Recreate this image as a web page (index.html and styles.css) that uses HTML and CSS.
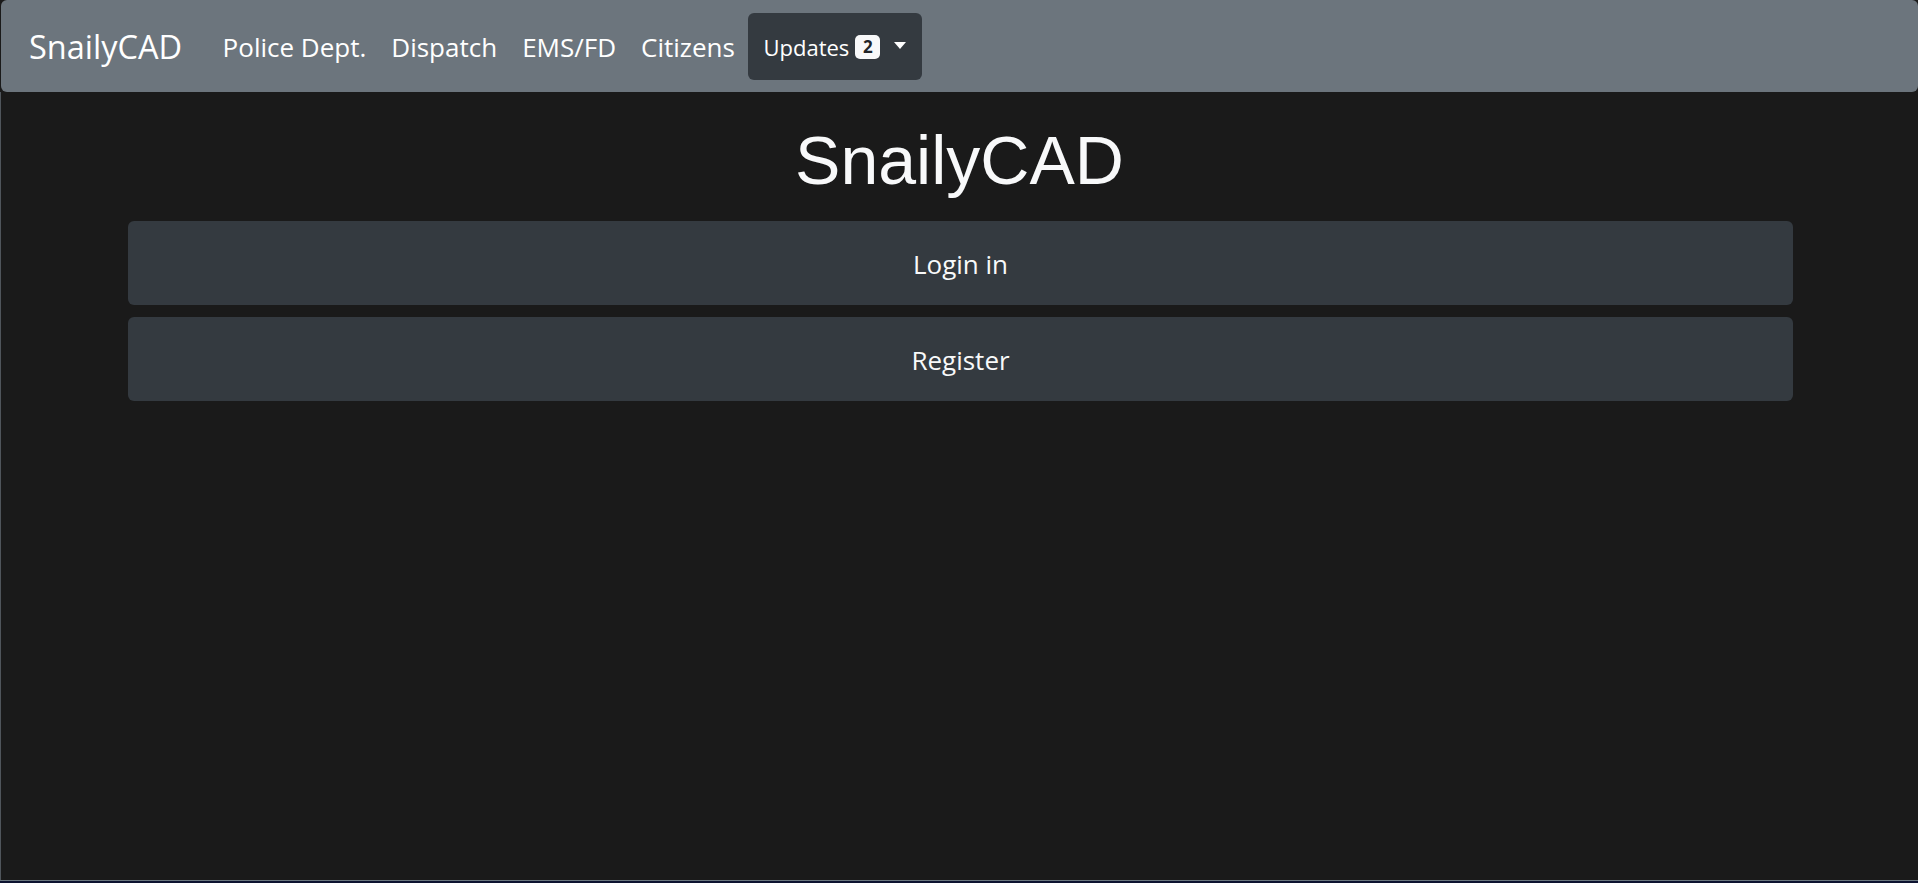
FILE: index.html
```html
<!DOCTYPE html>
<html lang="en">
<head>
<meta charset="utf-8">
<title>SnailyCAD</title>
<link rel="stylesheet" href="styles.css">
</head>
<body>
<div class="app">
  <nav class="navbar">
    <a class="brand" href="#">SnailyCAD</a>
    <ul class="nav">
      <li><a class="nav-link" href="#">Police Dept.</a></li>
      <li><a class="nav-link" href="#">Dispatch</a></li>
      <li><a class="nav-link" href="#">EMS/FD</a></li>
      <li><a class="nav-link" href="#">Citizens</a></li>
      <li>
        <button class="dropdown-toggle" type="button">
          <span class="dd-label">Updates</span>
          <span class="badge">2</span>
          <span class="caret"></span>
        </button>
      </li>
    </ul>
  </nav>
  <main class="main">
    <h1 class="title">SnailyCAD</h1>
    <div class="actions">
      <a class="btn-dark" href="#">Login in</a>
      <a class="btn-dark" href="#">Register</a>
    </div>
  </main>
  <div class="frame-line"></div>
  <div class="taskbar"></div>
</div>
</body>
</html>
```

FILE: styles.css
```css
* { box-sizing: border-box; }

html, body {
  margin: 0;
  padding: 0;
  height: 883px;
  overflow: hidden;
  background: #1a1a1a;
  font-family: "Open Sans", "Noto Sans", sans-serif;
  color: #f8f9fa;
}

.app {
  display: flex;
  flex-direction: column;
  height: 883px;
}

.navbar {
  display: flex;
  align-items: center;
  height: 92px;
  flex: 0 0 92px;
  margin-left: 1px;
  background: #6c757d;
  border-radius: 6px;
  padding-left: 28px;
}

.brand {
  font-size: 32.5px;
  color: #fff;
  text-decoration: none;
  margin-right: 28px;
  padding-top: 2px;
  line-height: 1;
}

.nav {
  display: flex;
  align-items: center;
  list-style: none;
  margin: 0;
  padding: 0;
}

.nav-link {
  display: block;
  padding: 2px 12.5px 0;
  font-size: 26px;
  color: #fff;
  text-decoration: none;
  line-height: 1;
}

.dropdown-toggle {
  display: flex;
  align-items: center;
  height: 67px;
  margin-left: 1px;
  margin-top: 1px;
  padding: 0 16px 0 15px;
  background: #343a40;
  border: 0;
  border-radius: 6px;
  color: #fff;
  font-family: inherit;
  font-size: 22px;
}

.dd-label {
  line-height: 1;
}

.badge {
  display: flex;
  align-items: center;
  justify-content: center;
  width: 25px;
  height: 24px;
  margin-left: 6px;
  border-radius: 5px;
  background: #f8f9fa;
  color: #212529;
  font-size: 17px;
  font-weight: 700;
}

.caret {
  width: 0;
  height: 0;
  margin-left: 14px;
  margin-top: -3px;
  border-left: 6.5px solid transparent;
  border-right: 6.5px solid transparent;
  border-top: 7px solid #fff;
}

.main {
  flex: 1 1 auto;
  border-left: 1px solid #4f555b;
}

.title {
  margin: 30px 0 0;
  text-align: center;
  font-family: "Liberation Sans", Arial, sans-serif;
  font-weight: 400;
  font-size: 68px;
  line-height: 77px;
  color: #f8f9fa;
}

.actions {
  display: flex;
  flex-direction: column;
  gap: 12px;
  margin: 22px 125px 0 127px;
}

.btn-dark {
  display: flex;
  align-items: center;
  justify-content: center;
  height: 84px;
  padding-top: 2px;
  background: #343a40;
  border-radius: 6px;
  color: #f8f9fa;
  font-size: 26px;
  text-decoration: none;
}

.frame-line {
  flex: 0 0 1px;
  background: #6b7880;
}

.taskbar {
  flex: 0 0 2px;
  background: #0d1330;
}
```
